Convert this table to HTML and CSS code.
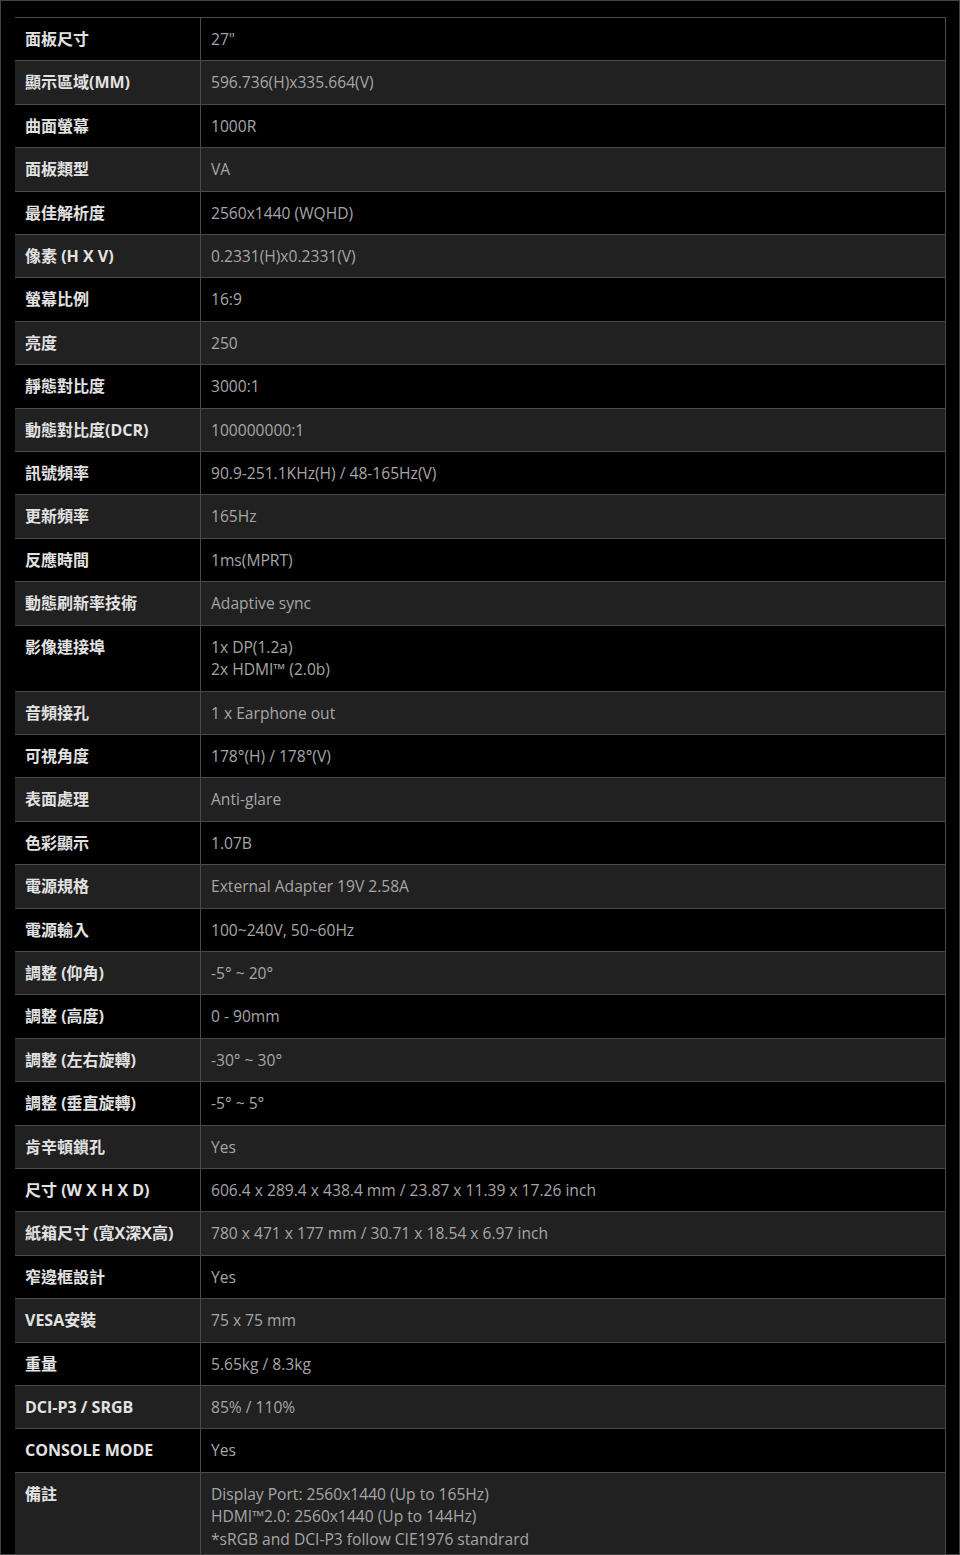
FILE: index.html
```html
<!DOCTYPE html>
<html lang="zh-Hant">
<head>
<meta charset="utf-8">
<title>規格</title>
<link rel="stylesheet" href="styles.css">
</head>
<body>
<div class="frame">
<table class="spec">
<tbody>
<tr><th>面板尺寸</th><td>27"</td></tr>
<tr><th>顯示區域(MM)</th><td>596.736(H)x335.664(V)</td></tr>
<tr><th>曲面螢幕</th><td>1000R</td></tr>
<tr><th>面板類型</th><td>VA</td></tr>
<tr><th>最佳解析度</th><td>2560x1440 (WQHD)</td></tr>
<tr><th>像素 (H X V)</th><td>0.2331(H)x0.2331(V)</td></tr>
<tr><th>螢幕比例</th><td>16:9</td></tr>
<tr><th>亮度</th><td>250</td></tr>
<tr><th>靜態對比度</th><td>3000:1</td></tr>
<tr><th>動態對比度(DCR)</th><td>100000000:1</td></tr>
<tr><th>訊號頻率</th><td>90.9-251.1KHz(H) / 48-165Hz(V)</td></tr>
<tr><th>更新頻率</th><td>165Hz</td></tr>
<tr><th>反應時間</th><td>1ms(MPRT)</td></tr>
<tr><th>動態刷新率技術</th><td>Adaptive sync</td></tr>
<tr><th>影像連接埠</th><td>1x DP(1.2a)<br>2x HDMI™ (2.0b)</td></tr>
<tr><th>音頻接孔</th><td>1 x Earphone out</td></tr>
<tr><th>可視角度</th><td>178°(H) / 178°(V)</td></tr>
<tr><th>表面處理</th><td>Anti-glare</td></tr>
<tr><th>色彩顯示</th><td>1.07B</td></tr>
<tr><th>電源規格</th><td>External Adapter 19V 2.58A</td></tr>
<tr><th>電源輸入</th><td>100~240V, 50~60Hz</td></tr>
<tr><th>調整 (仰角)</th><td>-5° ~ 20°</td></tr>
<tr><th>調整 (高度)</th><td>0 - 90mm</td></tr>
<tr><th>調整 (左右旋轉)</th><td>-30° ~ 30°</td></tr>
<tr><th>調整 (垂直旋轉)</th><td>-5° ~ 5°</td></tr>
<tr><th>肯辛頓鎖孔</th><td>Yes</td></tr>
<tr><th>尺寸 (W X H X D)</th><td>606.4 x 289.4 x 438.4 mm / 23.87 x 11.39 x 17.26 inch</td></tr>
<tr><th>紙箱尺寸 (寬X深X高)</th><td>780 x 471 x 177 mm / 30.71 x 18.54 x 6.97 inch</td></tr>
<tr><th>窄邊框設計</th><td>Yes</td></tr>
<tr><th>VESA安裝</th><td>75 x 75 mm</td></tr>
<tr><th>重量</th><td>5.65kg / 8.3kg</td></tr>
<tr><th>DCI-P3 / SRGB</th><td>85% / 110%</td></tr>
<tr><th>CONSOLE MODE</th><td>Yes</td></tr>
<tr><th>備註</th><td>Display Port: 2560x1440 (Up to 165Hz)<br>HDMI™2.0: 2560x1440 (Up to 144Hz)<br>*sRGB and DCI-P3 follow CIE1976 standrard</td></tr>
</tbody>
</table>
</div>
</body>
</html>
```

FILE: styles.css
```css
html, body {
  margin: 0;
  padding: 0;
  background: #000;
}

.frame {
  box-sizing: border-box;
  width: 960px;
  height: 1555px;
  overflow: hidden;
  border: 1px solid #444;
  background: #000;
  padding: 16px 14px 0 14px;
}

.spec {
  width: 931px;
  border-collapse: collapse;
  table-layout: fixed;
  border-right: 1px solid #4a4a4a;
  line-height: 22.4px;
}

.spec tr:nth-child(even) {
  background: #212121;
}

.spec th,
.spec td {
  border-top: 1px solid #4a4a4a;
  padding: 10px;
  vertical-align: top;
  text-align: left;
}

.spec th {
  width: 165px;
  color: #e2e2e2;
  font-weight: bold;
  font-family: "Open Sans", "Noto Sans CJK TC", sans-serif;
  font-size: 16px;
}

.spec td {
  border-left: 1px solid #4a4a4a;
  color: #a6a6a6;
  font-weight: normal;
  font-family: "Open Sans", "Noto Sans CJK TC", sans-serif;
  font-size: 15.6px;
}
```
